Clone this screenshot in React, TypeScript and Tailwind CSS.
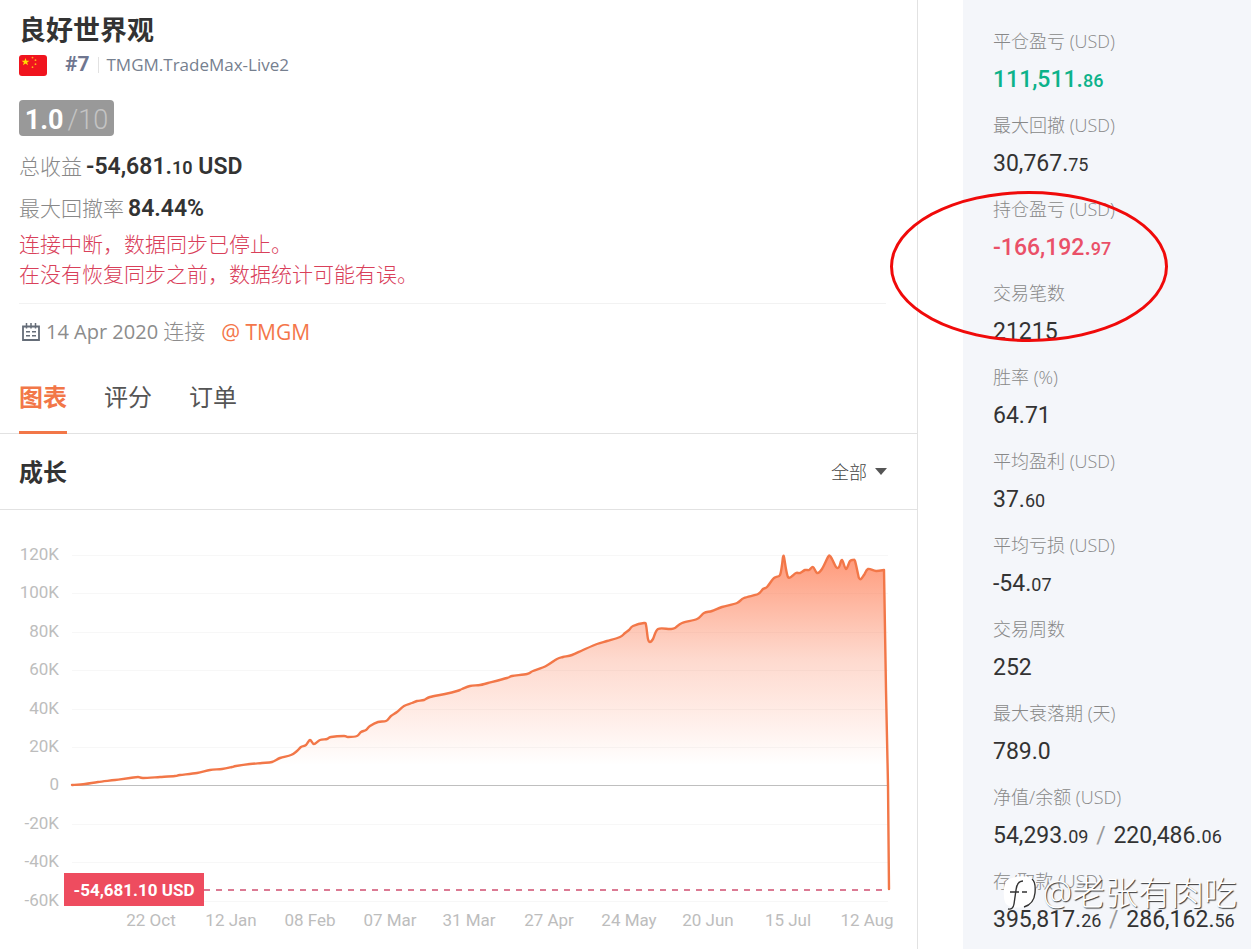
import React from 'react';

// [x, height above the zero line]
const growth: [number, number][] = [
  [72, 0], [85, 1], [98, 3], [115, 5], [130, 7], [138, 8], [143, 7], [160, 8], [175, 9], [180, 10], [197, 12],
  [210, 15], [222, 16], [232, 18], [236, 19], [250, 21], [262, 22], [272, 23], [280, 27], [291, 30], [297, 34],
  [301, 38], [306, 40], [310, 45], [314, 41], [320, 45], [327, 46], [331, 48], [344, 49], [348, 48], [357, 49],
  [361, 53], [366, 55], [370, 59], [378, 63], [386, 64], [391, 69], [397, 73], [404, 79], [412, 82], [417, 84],
  [424, 85], [430, 88], [445, 91], [457, 94], [462, 96], [470, 99], [480, 100], [488, 102], [507, 107],
  [512, 109], [527, 111], [533, 114], [546, 119], [557, 126], [563, 128], [572, 130], [583, 135], [597, 141],
  [607, 144], [620, 148], [625, 152], [629, 155], [633, 159], [644, 162], [646, 160], [648, 146], [650, 143],
  [653, 146], [658, 156], [670, 156], [675, 157], [682, 162], [697, 166], [704, 172], [712, 174], [722, 178],
  [737, 182], [744, 187], [758, 191], [763, 196], [767, 198], [773, 206], [776, 208], [780, 210], [782, 220],
  [783, 228], [784, 228], [786, 216], [788, 208], [791, 208], [796, 212], [800, 212], [805, 215], [809, 215],
  [813, 218], [817, 212], [822, 216], [828, 228], [830, 229], [832, 226], [836, 218], [839, 218], [842, 225],
  [846, 216], [850, 224], [853, 225], [855, 224], [858, 211], [859, 207], [861, 206], [864, 210], [868, 216],
  [876, 214], [884, 215],
];

const yTicks = ['120K', '100K', '80K', '60K', '40K', '20K', '0', '-20K', '-40K', '-60K'];
const xTicks = ['22 Oct', '12 Jan', '08 Feb', '07 Mar', '31 Mar', '27 Apr', '24 May', '20 Jun', '15 Jul', '12 Aug'];

const ZERO_Y = 275;

function smoothPath(data: [number, number][]) {
  const pts = data.map(([x, h]) => [x, ZERO_Y - h]);
  let d = `M${pts[0][0]} ${pts[0][1]}`;
  for (let i = 0; i < pts.length - 1; i++) {
    const p0 = pts[Math.max(i - 1, 0)];
    const p1 = pts[i];
    const p2 = pts[i + 1];
    const p3 = pts[Math.min(i + 2, pts.length - 1)];
    d += `C${p1[0] + (p2[0] - p0[0]) / 6} ${p1[1] + (p2[1] - p0[1]) / 6} ${p2[0] - (p3[0] - p1[0]) / 6} ${
      p2[1] - (p3[1] - p1[1]) / 6
    } ${p2[0]} ${p2[1]}`;
  }
  return d;
}

type Amount = { whole: string; cents?: string };

const stats: { label: string; values: Amount[]; tone?: 'up' | 'down' }[] = [
  { label: '平仓盈亏 (USD)', values: [{ whole: '111,511.', cents: '86' }], tone: 'up' },
  { label: '最大回撤 (USD)', values: [{ whole: '30,767.', cents: '75' }] },
  { label: '持仓盈亏 (USD)', values: [{ whole: '-166,192.', cents: '97' }], tone: 'down' },
  { label: '交易笔数', values: [{ whole: '21215' }] },
  { label: '胜率 (%)', values: [{ whole: '64.71' }] },
  { label: '平均盈利 (USD)', values: [{ whole: '37.', cents: '60' }] },
  { label: '平均亏损 (USD)', values: [{ whole: '-54.', cents: '07' }] },
  { label: '交易周数', values: [{ whole: '252' }] },
  { label: '最大衰落期 (天)', values: [{ whole: '789.0' }] },
  { label: '净值/余额 (USD)', values: [{ whole: '54,293.', cents: '09' }, { whole: '220,486.', cents: '06' }] },
  { label: '存/取款 (USD)', values: [{ whole: '395,817.', cents: '26' }, { whole: '286,162.', cents: '56' }] },
];

const toneClass = {
  up: 'text-[#0db28a]',
  down: 'text-[#ea5068]',
};

function ChinaFlag() {
  return (
    <svg width="28" height="21" viewBox="0 0 28 21" role="img" aria-label="China">
      <rect width="28" height="21" rx="3" fill="#f0141e" />
      <path d="M6.5 3l1 2.7h2.9L8.1 7.4l.9 2.8-2.5-1.7L4 10.2l.9-2.8-2.3-1.7h2.9z" fill="#ffde00" />
      <g fill="#ffb21a">
        <circle cx="13.5" cy="2.6" r="0.9" />
        <circle cx="16.5" cy="5.2" r="0.9" />
        <circle cx="16.5" cy="9.2" r="0.9" />
        <circle cx="13.5" cy="12.2" r="0.9" />
      </g>
    </svg>
  );
}

function CalendarIcon() {
  return (
    <svg width="18" height="18" viewBox="0 0 18 18" fill="none" stroke="#656d78" aria-hidden="true">
      <path d="M1 3.5h16v13.5H1z" strokeWidth="1.8" />
      <path d="M4.5 0v5.5M9 0v5.5M13.5 0v5.5" strokeWidth="1.5" />
      <path d="M4 8.8h4M10 8.8h4M4 12.8h4M10 12.8h4" strokeWidth="1.6" />
    </svg>
  );
}

function GrowthChart() {
  const line = smoothPath(growth);
  return (
    <svg viewBox="0 0 917 439" className="block w-full h-auto font-[Roboto,sans-serif]" role="img" aria-label="成长">
      <defs>
        <linearGradient id="growthFill" gradientUnits="userSpaceOnUse" x1="0" y1="45" x2="0" y2="255">
          <stop offset="0" stopColor="#ff7043" stopOpacity="0.72" />
          <stop offset="0.5" stopColor="#fb7a52" stopOpacity="0.28" />
          <stop offset="1" stopColor="#ff7043" stopOpacity="0" />
        </linearGradient>
      </defs>
      {yTicks.map((tick, i) => {
        const y = 45 + Math.round(i * 38.4);
        return (
          <g key={tick}>
            <path d={`M72 ${y + 0.5}H888`} stroke={tick === '0' ? '#bfbfbf' : '#f7f7f7'} />
            <text x="59" y={y + 5} textAnchor="end" fontSize="17" fill="#bdbdbd">
              {tick}
            </text>
          </g>
        );
      })}
      {xTicks.map((tick, i) => (
        <text key={tick} x={151 + Math.round(i * 79.6)} y="416" textAnchor="middle" fontSize="17" fill="#bdbdbd">
          {tick}
        </text>
      ))}
      <path d={`${line}L888 ${ZERO_Y}H72Z`} fill="url(#growthFill)" />
      <path d="M204 380H886" stroke="#cf4f70" strokeWidth="1.5" strokeDasharray="6 6" />
      <path
        d={`${line}L886 180L888 ${ZERO_Y}L889 379`}
        fill="none"
        stroke="#f27748"
        strokeWidth="2.4"
        strokeLinejoin="round"
        strokeLinecap="round"
      />
      <rect x="64" y="363" width="140" height="33" fill="#ee4c5f" />
      <text x="134" y="386" textAnchor="middle" fontSize="17" fontWeight="700" fill="#fff">
        -54,681.10 USD
      </text>
    </svg>
  );
}

function Watermark() {
  return (
    <div className="absolute right-[14px] bottom-9 flex h-10 items-center gap-1 whitespace-nowrap text-white">
      <svg width="36" height="40" viewBox="0 0 36 40" aria-hidden="true">
        <path d="M6 6Q18 1 29 5Q34 8 33 20Q32 32 21 34Q8 36 3 31Q0 26 1 15Q2 8 6 6Z" fill="#fff" />
        <path
          d="M20 8Q14 8 13 17L11 31Q10 37 5 36M7 19H16M19 19H24M29 6Q33 9 32 20Q31 31 21 34"
          fill="none"
          stroke="#333"
          strokeWidth="1.4"
        />
      </svg>
      <span className="text-[33px] leading-10 font-light [text-shadow:1px_1px_1px_#333]">@老张有肉吃</span>
    </div>
  );
}

export default function App() {
  return (
    <div className="flex min-h-screen bg-white font-['Open_Sans','Noto_Sans_CJK_SC',sans-serif] text-[#333]">
      <main className="min-w-0 flex-1 border-r border-[#e2e2e2]">
        <header className="px-[19px] pt-[10px]">
          <h1 className="text-[27px] leading-10 font-bold">良好世界观</h1>
          <div className="mt-[3px] flex h-6 items-center">
            <ChinaFlag />
            <span className="ml-[18px] font-[Roboto,sans-serif] text-[21px] font-bold text-[#6f7690]">#7</span>
            <span className="ml-2 h-4 w-px bg-[#e2e2e2]" />
            <span className="ml-2 text-[17px] text-[#76808f]">TMGM.TradeMax-Live2</span>
          </div>
          <div className="mt-[23px] flex h-9 w-[95px] items-center justify-center gap-1 rounded-sm bg-[#999] pt-1 font-[Roboto,sans-serif] text-[27px]">
            <span className="font-bold text-white">1.0</span>
            <span className="font-light text-[#c4c4c4]">/10</span>
          </div>
          <div className="mt-[14px] flex h-8 items-baseline gap-1">
            <span className="text-[21px] leading-8 font-light text-[#888]">总收益</span>
            <span className="font-[Roboto,sans-serif] text-[23px] font-semibold">
              -54,681.<span className="text-[18px]">10</span> USD
            </span>
          </div>
          <div className="mt-[10px] flex h-8 items-baseline gap-1">
            <span className="text-[21px] leading-8 font-light text-[#888]">最大回撤率</span>
            <span className="font-[Roboto,sans-serif] text-[23px] font-semibold">84.44%</span>
          </div>
          <p className="mt-[5px] text-[21px] leading-[30px] font-light text-[#d9405a]">
            连接中断，数据同步已停止。
            <br />
            在没有恢复同步之前，数据统计可能有误。
          </p>
          <div className="mr-3 mt-[14px] flex h-[45px] items-center border-t border-[#f2f2f2] pt-[11px] text-xl leading-8">
            <span className="ml-[3px]">
              <CalendarIcon />
            </span>
            <span className="ml-1.5 text-[#8c8c8c]">
              14 Apr 2020 <span className="text-[21px] font-light">连接</span>
            </span>
            <a href="#tmgm" className="ml-4 text-[21px] text-[#f4764a]">
              @ TMGM
            </a>
          </div>
        </header>

        <nav className="mt-6 flex gap-[37px] border-b border-[#e2e2e2] px-[19px] text-2xl">
          <button className="-mb-px h-[62px] border-b-3 border-[#f27748] pb-[10px] font-bold text-[#f27748]">图表</button>
          <button className="h-[61px] pb-3 text-[#555]">评分</button>
          <button className="h-[61px] pb-3 text-[#555]">订单</button>
        </nav>

        <section>
          <div className="flex h-[76px] items-center justify-between border-b border-[#e2e2e2] pr-[30px] pl-[19px]">
            <h2 className="text-2xl font-bold">成长</h2>
            <label className="relative flex items-center text-lg font-light text-[#444]">
              <select aria-label="时间范围" className="w-14 appearance-none bg-transparent outline-none">
                <option>全部</option>
              </select>
              <svg className="pointer-events-none absolute right-0" width="12" height="8" viewBox="0 0 12 8" aria-hidden="true">
                <path d="M0 0h12L6 7z" fill="#555" />
              </svg>
            </label>
          </div>
          <GrowthChart />
        </section>
      </main>

      <aside className="relative ml-[45px] w-72 shrink-0 bg-[#f4f6fa] pt-[29px] pb-[13px] pl-[30px]">
        <dl className="flex flex-col gap-[17px]">
          {stats.map((stat) => (
            <div key={stat.label}>
              <dt className="h-6 text-[18px] leading-6 font-light text-[#888]">{stat.label}</dt>
              <dd
                className={`mt-[11px] h-8 font-[Roboto,sans-serif] text-[23px] leading-8 whitespace-nowrap ${
                  stat.tone ? `font-medium ${toneClass[stat.tone]}` : ''
                }`}
              >
                {stat.values.map((value, i) => (
                  <React.Fragment key={value.whole}>
                    {i > 0 && <span className="mx-0.5 text-[#999]"> / </span>}
                    {value.whole}
                    {value.cents && <span className="text-[18px]">{value.cents}</span>}
                  </React.Fragment>
                ))}
              </dd>
            </div>
          ))}
        </dl>
        <div className="pointer-events-none absolute top-[191px] left-[-73px] h-[151px] w-[278px] rounded-[50%] border-3 border-[#f00a0a]" />
        <Watermark />
      </aside>
    </div>
  );
}
